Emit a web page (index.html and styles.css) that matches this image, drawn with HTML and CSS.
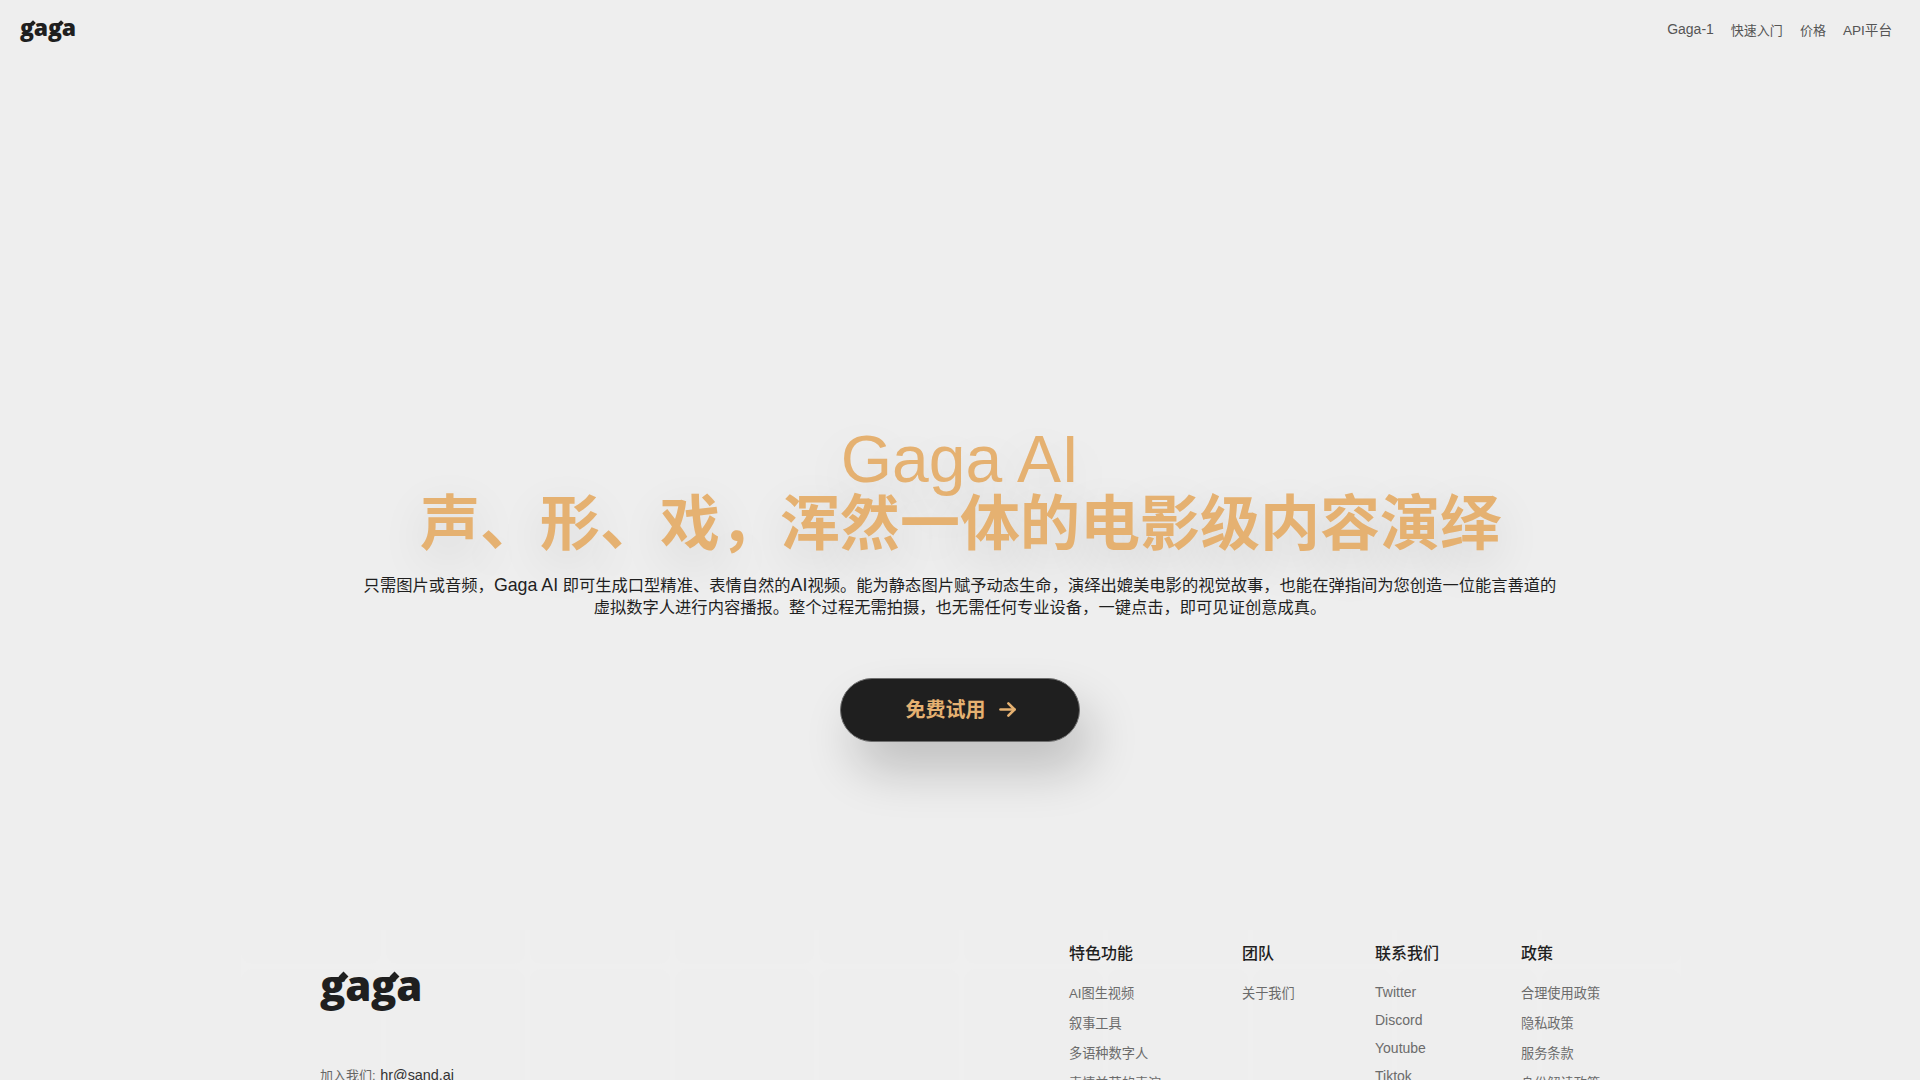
FILE: index.html
```html
<!DOCTYPE html>
<html lang="zh-CN">
<head>
<meta charset="utf-8">
<title>Gaga AI</title>
<link rel="stylesheet" href="styles.css">
</head>
<body>
<header class="topbar">
  <a class="logo logo-small"><span class="g">g</span>a<span class="g">g</span>a</a>
  <nav class="nav">
    <a class="nav-first">Gaga-1</a>
    <a>快速入门</a>
    <a>价格</a>
    <a class="nav-last">API平台</a>
  </nav>
</header>
<main class="hero">
  <h1 class="title"><span class="title-en">Gaga AI</span><span class="title-zh">声、形、戏&#xFF0C;浑然一体的电影级内容演绎</span></h1>
  <p class="lead">只需图片或音频&#xFF0C;<span class="latin">Gaga AI</span> 即可生成口型精准、表情自然的<span class="latin">AI</span>视频。能为静态图片赋予动态生命&#xFF0C;演绎出媲美电影的视觉故事&#xFF0C;也能在弹指间为您创造一位能言善道的虚拟数字人进行内容播报。整个过程无需拍摄&#xFF0C;也无需任何专业设备&#xFF0C;一键点击&#xFF0C;即可见证创意成真。</p>
  <a class="cta"><span class="cta-label">免费试用</span>
    <svg class="cta-arrow" viewBox="0 0 24 24" fill="none" stroke="currentColor" stroke-width="3" stroke-linecap="round" stroke-linejoin="round"><path d="M4 12h16"/><path d="M13 5l7 7-7 7"/></svg>
  </a>
</main>
<footer class="footer">
  <div class="tiles">
    <i></i><i></i><i></i><i></i><i></i><i></i><i></i><i></i><i></i><i></i>
    <i></i><i></i><i></i><i></i><i></i><i></i><i></i><i></i><i></i><i></i>
  </div>
  <div class="footer-inner">
    <div class="brand">
      <a class="logo logo-large"><span class="g">g</span>a<span class="g">g</span>a</a>
      <p class="join">加入我们: <span class="mail">hr@sand.ai</span></p>
    </div>
    <div class="col">
      <h2>特色功能</h2>
      <ul><li>AI图生视频</li><li>叙事工具</li><li>多语种数字人</li><li>表情并茂的表演</li></ul>
    </div>
    <div class="col">
      <h2>团队</h2>
      <ul><li>关于我们</li></ul>
    </div>
    <div class="col col-latin">
      <h2>联系我们</h2>
      <ul><li>Twitter</li><li>Discord</li><li>Youtube</li><li>Tiktok</li></ul>
    </div>
    <div class="col">
      <h2>政策</h2>
      <ul><li>合理使用政策</li><li>隐私政策</li><li>服务条款</li><li>身份解读政策</li></ul>
    </div>
  </div>
</footer>
</body>
</html>
```

FILE: styles.css
```css
* { box-sizing: border-box; }
html, body { height: 1080px; overflow: hidden; }
body {
  margin: 0;
  background: #eeeeee;
  color: #1f1f1f;
  font-family: "Liberation Sans", "Noto Sans CJK SC", sans-serif;
}

.logo {
  display: block;
  font-family: "Open Sans", sans-serif;
  font-weight: 800;
  color: #1f1f1f;
  line-height: 1;
}
.logo .g { position: relative; display: inline-block; }
.logo .g::after {
  content: "";
  position: absolute;
  background: #1f1f1f;
  transform: rotate(45deg);
}
.logo-small { font-size: 23px; letter-spacing: -0.2px; margin-top: -4px; }
.logo-small .g::after { width: 4px; height: 4px; right: -1px; top: 5px; }
.logo-large { font-size: 42px; letter-spacing: -0.3px; margin-top: 2px; }
.logo-large .g::after { width: 7px; height: 7px; right: -2px; top: 9px; }

.topbar {
  height: 58px;
  padding: 0 28px 0 20px;
  display: flex;
  align-items: center;
  justify-content: space-between;
}
.nav {
  display: flex;
  align-items: center;
  gap: 17px;
  font-size: 13px;
  color: #555;
}
.nav-first { font-size: 14px; }
.nav-last { font-size: 13.6px; }

.hero {
  padding-top: 369px;
  height: 872px;
  display: flex;
  flex-direction: column;
  align-items: center;
}
.title {
  margin: 0;
  color: #e5b171;
  text-align: center;
  text-shadow: 0 16px 50px rgba(0, 0, 0, 0.12);
}
.title-en { display: block; font-size: 66px; font-weight: 400; line-height: 64px; }
.title-zh { display: block; font-size: 60px; font-weight: 700; line-height: 68px; }
.lead {
  width: 1200px;
  margin: 16px 0 0;
  font-size: 16.3px;
  line-height: 21.6px;
  text-align: center;
  color: #1f1f1f;
}
.latin { font-size: 17.8px; }
.cta {
  margin-top: 60px;
  width: 240px;
  height: 64px;
  display: flex;
  align-items: center;
  justify-content: center;
  gap: 11px;
  border-radius: 32px;
  border: 1px solid #6e6e6e;
  background: #1f1f1f;
  color: #e5b171;
  font-size: 20px;
  font-weight: 700;
  box-shadow: 12px 28px 50px rgba(0, 0, 0, 0.2);
}
.cta-label { margin: -3px 0 0 3px; }
.cta-arrow { width: 21px; height: 21px; margin-top: -1px; }

.footer {
  position: relative;
  height: 208px;
  padding-top: 12px;
}
.tiles {
  position: absolute;
  left: 241px;
  top: 0;
  width: 1440px;
  height: 250px;
  display: grid;
  grid-template-columns: repeat(10, 1fr);
  grid-template-rows: 34px 144px;
  gap: 5px;
  background: #efefef;
}
.tiles i {
  background: #eeeeee;
  border-radius: 0 0 12px 12px;
}
.tiles i:nth-child(n+11) { border-radius: 12px; }
.footer-inner {
  position: relative;
  width: 1280px;
  margin: 0 auto;
  display: grid;
  grid-template-columns: 749px 173px 133px 146px 1fr;
}
.brand { padding-top: 20px; }
.join {
  margin: 59px 0 0;
  font-size: 13px;
  line-height: 20px;
  color: #666;
}
.mail { font-size: 14.4px; color: #333; margin-left: 1px; }
.col h2 {
  margin: 0;
  font-size: 16px;
  line-height: 24px;
  font-weight: 500;
  color: #1f1f1f;
}
.col ul {
  list-style: none;
  margin: 18px 0 0;
  padding: 0;
  display: flex;
  flex-direction: column;
  gap: 10px;
  font-size: 13.2px;
  line-height: 20px;
  color: #6b6b6b;
  white-space: nowrap;
}
.col-latin ul { margin-top: 16px; gap: 8px; font-size: 14px; }
```
